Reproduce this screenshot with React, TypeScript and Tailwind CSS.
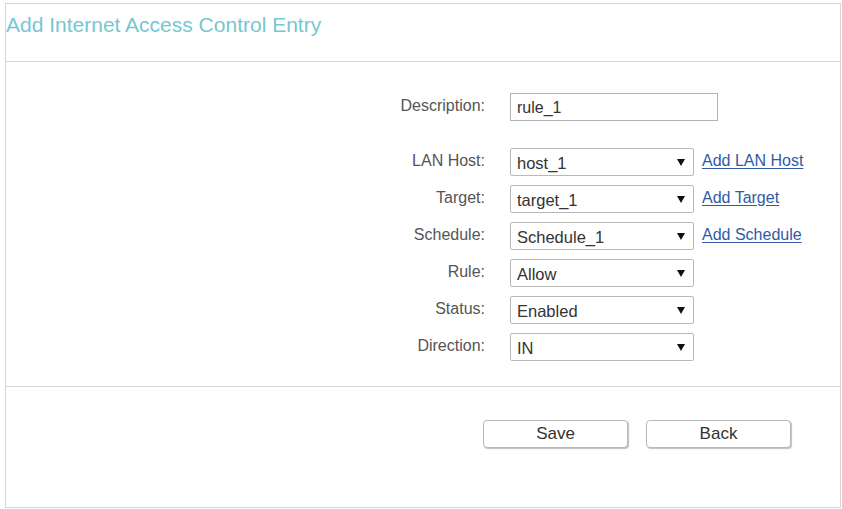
import React from 'react'

const FONT = { fontFamily: '"Liberation Sans", Arial, sans-serif' }

type SelectRow = {
  label: string
  value: string
  link?: string
}

const rows: SelectRow[] = [
  { label: 'LAN Host:', value: 'host_1', link: 'Add LAN Host' },
  { label: 'Target:', value: 'target_1', link: 'Add Target' },
  { label: 'Schedule:', value: 'Schedule_1', link: 'Add Schedule' },
  { label: 'Rule:', value: 'Allow' },
  { label: 'Status:', value: 'Enabled' },
  { label: 'Direction:', value: 'IN' },
]

const Arrow = () => (
  <svg className="h-[7px] w-[8px] shrink-0" viewBox="0 0 8 7">
    <path d="M0 0 H8 L4 7 Z" fill="#111" />
  </svg>
)

const FieldLabel = ({ children }: { children: React.ReactNode }) => (
  <div className="mt-[3px] w-[480px] shrink-0 pr-px text-right text-[16px] leading-[20px] text-[#555]">{children}</div>
)

const FakeSelect = ({ value }: { value: string }) => (
  <div className="flex h-[28px] w-[184px] items-center justify-between rounded-[2px] border border-[#b8b8b8] bg-white pl-[6px] pr-[8px]">
    <span className="pt-[2px] text-[16.5px] leading-[20px] text-[#333]">{value}</span>
    <Arrow />
  </div>
)

export default function App() {
  return (
    <div className="min-h-[509px] bg-white" style={FONT}>
      <div className="ml-[5px] pt-[3px]">
        <div className="flex h-[505px] w-[836px] flex-col border border-[#d6d6d6]">
          <div className="h-[58px] shrink-0 border-b border-[#d6d6d6] pt-[9px]">
            <h1 className="text-[21px] leading-[24px] font-normal text-[#77c6d2]">Add Internet Access Control Entry</h1>
          </div>

          <div className="h-[325px] shrink-0 border-b border-[#d6d6d6] pt-[31px]">
            <div className="flex items-start">
              <FieldLabel>Description:</FieldLabel>
              <div className="ml-[24px] flex h-[28px] w-[208px] items-center border border-[#b3b3b3] bg-white pl-[6px]">
                <span className="pt-[2px] text-[16px] leading-[20px] text-[#333]">rule_1</span>
              </div>
            </div>

            <div className="mt-[27px] flex flex-col gap-[9px]">
              {rows.map((row) => (
                <div className="flex items-start" key={row.label}>
                  <FieldLabel>{row.label}</FieldLabel>
                  <div className="ml-[24px] flex items-center">
                    <FakeSelect value={row.value} />
                    {row.link ? (
                      <a
                        className="ml-[8px] -mt-[3px] text-[16px] leading-[20px] text-[#2f5ba6] underline underline-offset-2"
                        href="#"
                      >
                        {row.link}
                      </a>
                    ) : null}
                  </div>
                </div>
              ))}
            </div>
          </div>

          <div className="flex flex-1 items-start gap-[18px] pl-[477px] pt-[33px]">
            <button
              className="h-[28px] w-[145px] rounded-[4px] border border-[#b8b8b8] bg-white text-[17px] leading-[20px] text-[#333] shadow-[1px_1px_1px_rgba(0,0,0,0.25)]"
              type="button"
            >
              Save
            </button>
            <button
              className="h-[28px] w-[145px] rounded-[4px] border border-[#b8b8b8] bg-white text-[17px] leading-[20px] text-[#333] shadow-[1px_1px_1px_rgba(0,0,0,0.25)]"
              type="button"
            >
              Back
            </button>
          </div>
        </div>
      </div>
    </div>
  )
}
